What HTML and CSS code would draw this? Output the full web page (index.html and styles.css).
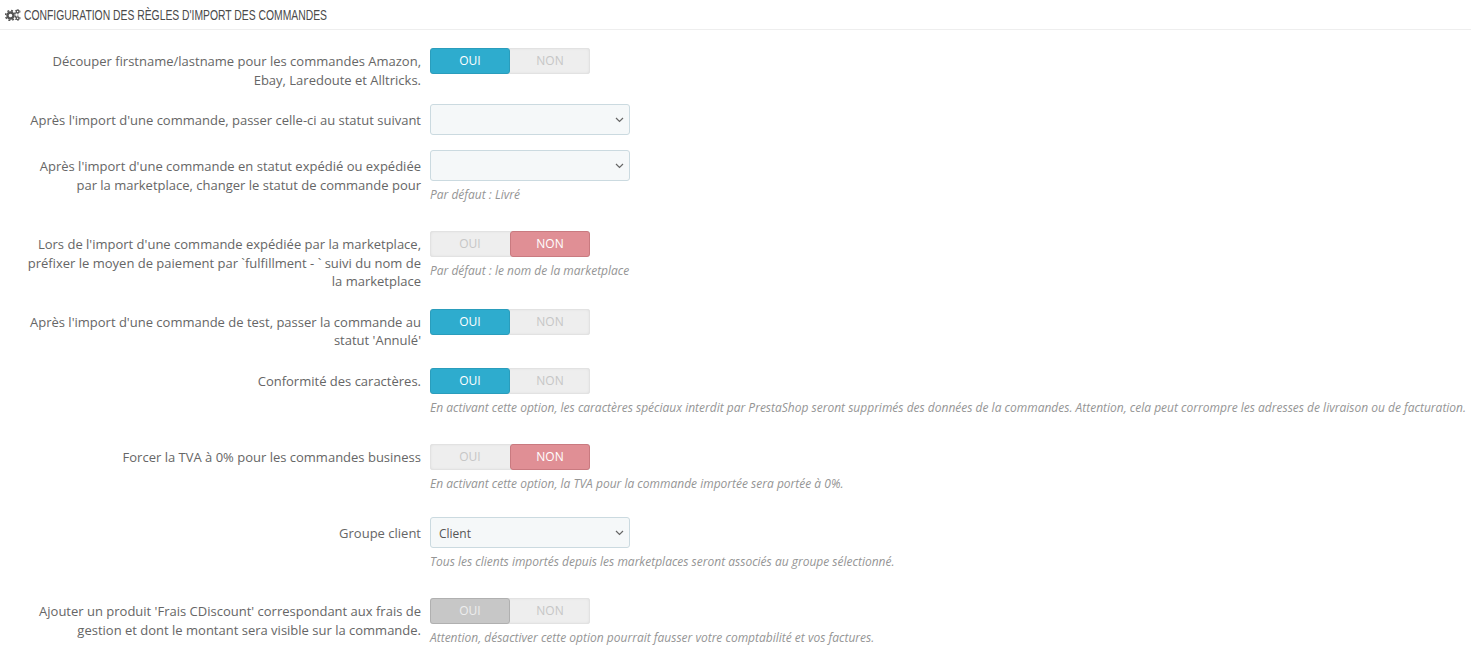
FILE: index.html
```html
<!DOCTYPE html>
<html lang="fr">
<head>
	<meta charset="utf-8" />
	<title>Configuration des règles d'import des commandes</title>
	<link rel="stylesheet" href="styles.css">
</head>
<body>
	<div class="panel">
		<h3 class="panel-heading">
			<svg class="cogs" width="16" height="12" viewBox="0 0 16 12">
				<circle cx="5.5" cy="6.5" r="3" fill="none" stroke="#555" stroke-width="2.4"/>
				<circle cx="5.5" cy="6.5" r="4.9" fill="none" stroke="#555" stroke-width="1.6" stroke-dasharray="1.9 1.95"/>
				<circle cx="12.6" cy="2.6" r="1.4" fill="none" stroke="#555" stroke-width="1.3"/>
				<circle cx="12.6" cy="2.6" r="2.4" fill="none" stroke="#555" stroke-width="1" stroke-dasharray="1 1.5"/>
				<circle cx="12.6" cy="9.2" r="1.4" fill="none" stroke="#555" stroke-width="1.3"/>
				<circle cx="12.6" cy="9.2" r="2.4" fill="none" stroke="#555" stroke-width="1" stroke-dasharray="1 1.5"/>
			</svg>
			<span class="heading-text">Configuration des règles d'import des commandes</span>
		</h3>

		<div class="form-group">
			<label class="control-label">Découper firstname/lastname pour les commandes Amazon, Ebay, Laredoute et Alltricks.</label>
			<div class="control">
				<div class="switch"><span class="on">OUI</span><span class="off">NON</span></div>
			</div>
		</div>

		<div class="form-group">
			<label class="control-label">Après l'import d'une commande, passer celle-ci au statut suivant</label>
			<div class="control">
				<div class="select-wrap">
					<select class="select"><option></option></select>
					<svg class="chevron" width="9" height="6" viewBox="0 0 9 6"><path d="M1 1l3.5 3.5L8 1" fill="none" stroke="#666" stroke-width="1.2"/></svg>
				</div>
			</div>
		</div>

		<div class="form-group">
			<label class="control-label">Après l'import d'une commande en statut expédié ou expédiée par la marketplace, changer le statut de commande pour</label>
			<div class="control">
				<div class="select-wrap">
					<select class="select"><option></option></select>
					<svg class="chevron" width="9" height="6" viewBox="0 0 9 6"><path d="M1 1l3.5 3.5L8 1" fill="none" stroke="#666" stroke-width="1.2"/></svg>
				</div>
				<p class="help">Par défaut : Livré</p>
			</div>
		</div>

		<div class="form-group">
			<label class="control-label">Lors de l'import d'une commande expédiée par la marketplace, préfixer le moyen de paiement par `fulfillment - ` suivi du nom de la marketplace</label>
			<div class="control">
				<div class="switch"><span class="off">OUI</span><span class="no">NON</span></div>
				<p class="help">Par défaut : le nom de la marketplace</p>
			</div>
		</div>

		<div class="form-group">
			<label class="control-label">Après l'import d'une commande de test, passer la commande au statut 'Annulé'</label>
			<div class="control">
				<div class="switch"><span class="on">OUI</span><span class="off">NON</span></div>
			</div>
		</div>

		<div class="form-group">
			<label class="control-label">Conformité des caractères.</label>
			<div class="control">
				<div class="switch"><span class="on">OUI</span><span class="off">NON</span></div>
				<p class="help">En activant cette option, les caractères spéciaux interdit par PrestaShop seront supprimés des données de la commandes. Attention, cela peut corrompre les adresses de livraison ou de facturation.</p>
			</div>
		</div>

		<div class="form-group">
			<label class="control-label">Forcer la TVA à 0% pour les commandes business</label>
			<div class="control">
				<div class="switch"><span class="off">OUI</span><span class="no">NON</span></div>
				<p class="help">En activant cette option, la TVA pour la commande importée sera portée à 0%.</p>
			</div>
		</div>

		<div class="form-group">
			<label class="control-label">Groupe client</label>
			<div class="control">
				<div class="select-wrap">
					<select class="select"><option>Client</option></select>
					<svg class="chevron" width="9" height="6" viewBox="0 0 9 6"><path d="M1 1l3.5 3.5L8 1" fill="none" stroke="#666" stroke-width="1.2"/></svg>
				</div>
				<p class="help">Tous les clients importés depuis les marketplaces seront associés au groupe sélectionné.</p>
			</div>
		</div>

		<div class="form-group">
			<label class="control-label">Ajouter un produit 'Frais CDiscount' correspondant aux frais de gestion et dont le montant sera visible sur la commande.</label>
			<div class="control">
				<div class="switch"><span class="locked">OUI</span><span class="off">NON</span></div>
				<p class="help">Attention, désactiver cette option pourrait fausser votre comptabilité et vos factures.</p>
			</div>
		</div>
	</div>
</body>
</html>
```

FILE: styles.css
```css
html, body { margin: 0; padding: 0; background: #fff; }
body { font-family: "Open Sans", "Liberation Sans", sans-serif; font-size: 12px; color: #555; overflow: hidden; }

.panel-heading { display: flex; align-items: center; gap: 3px; height: 29px; margin: 0 0 15px; padding: 0 0 0 5px; border-bottom: 1px solid #eee; font-family: "Liberation Sans", sans-serif; font-size: 14px; font-weight: normal; text-transform: uppercase; color: #4a4a4a; white-space: nowrap; }
.heading-text { display: inline-block; transform: scaleX(0.74); transform-origin: left center; }
.cogs { flex: none; }

.form-group { display: flex; margin-bottom: 15px; }
.control-label { flex: none; width: 401px; margin-left: 20px; padding-top: 7px; font-size: 13px; line-height: 18.57px; text-align: right; color: #666; }
.control { flex: none; margin-left: 9px; white-space: nowrap; }

.switch { display: flex; width: 160px; height: 26px; margin-top: 3px; border-radius: 3px; background: #eee; box-shadow: inset 0 0 0 1px #e2e2e2, inset 0 0 3px #d4d4d4; line-height: 24px; text-align: center; }
.switch span { box-sizing: border-box; width: 80px; height: 26px; border: 1px solid transparent; border-radius: 3px; }
.switch .on { background: #2eacce; border-color: #2a9dbc; color: #fff; }
.switch .no { background: #e08f95; border-color: #c97a80; color: #fff; }
.switch .off { color: #c6c6c6; }
.switch .locked { background: #c7c7c7; border-color: #b0b0b0; color: #eee; }

.select-wrap { position: relative; width: 200px; height: 31px; }
.select { display: block; box-sizing: border-box; width: 200px; height: 31px; padding: 2px 8px 0; border: 1px solid #cbdae0; border-radius: 3px; background-color: #f5f8f9; font-family: inherit; font-size: 12px; color: #555; appearance: none; }
.chevron { position: absolute; top: 13px; right: 6px; pointer-events: none; }

.help { margin: 5px 0 10px; font-size: 12px; font-style: italic; line-height: 17.1px; color: #959595; }
```
